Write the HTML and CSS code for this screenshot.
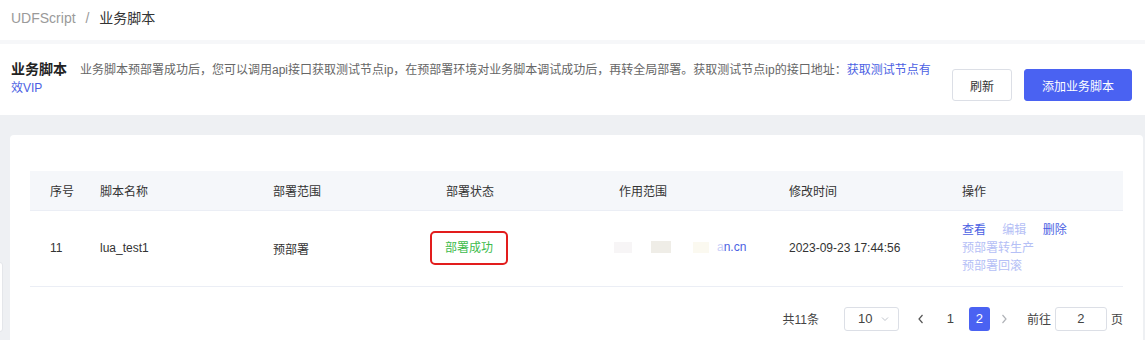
FILE: index.html
```html
<!DOCTYPE html>
<html lang="zh-CN">
<head>
    <meta charset="UTF-8">
    <meta name="viewport" content="width=device-width, initial-scale=1.0">
    <title>业务脚本</title>
    <link rel="stylesheet" href="styles.css">
</head>
<body>
    <div class="breadcrumb">
        <span class="crumb-parent">UDFScript</span>
        <span class="crumb-sep">/</span>
        <span class="crumb-current">业务脚本</span>
    </div>

    <div class="page-head">
        <p class="head-text">
            <span class="head-title">业务脚本</span>业务脚本预部署成功后，您可以调用api接口获取测试节点ip，在预部署环境对业务脚本调试成功后，再转全局部署。获取测试节点ip的接口地址：<a class="link" href="#">获取测试节点有效VIP</a>
        </p>
        <div class="head-actions">
            <button type="button" class="btn">刷新</button>
            <button type="button" class="btn btn-primary">添加业务脚本</button>
        </div>
    </div>

    <div class="content">
        <div class="card">
            <table class="script-table">
                <colgroup>
                    <col class="col-index">
                    <col class="col-wide">
                    <col class="col-wide">
                    <col class="col-wide">
                    <col class="col-scope">
                    <col class="col-wide">
                    <col>
                </colgroup>
                <thead>
                    <tr>
                        <th>序号</th>
                        <th>脚本名称</th>
                        <th>部署范围</th>
                        <th>部署状态</th>
                        <th>作用范围</th>
                        <th>修改时间</th>
                        <th>操作</th>
                    </tr>
                </thead>
                <tbody>
                    <tr>
                        <td>11</td>
                        <td>lua_test1</td>
                        <td>预部署</td>
                        <td><span class="status-mark"><span class="status-ok">部署成功</span></span></td>
                        <td>
                            <span class="scope">
                                <span class="blot blot-a"></span>
                                <span class="blot blot-b"></span>
                                <span class="blot blot-c"></span>
                                <a class="link scope-link" href="#"><span class="faded">a</span>n.cn</a>
                            </span>
                        </td>
                        <td>2023-09-23 17:44:56</td>
                        <td>
                            <div class="ops">
                                <a class="op" href="#">查看</a>
                                <a class="op op-off" href="#">编辑</a>
                                <a class="op" href="#">删除</a>
                            </div>
                            <div class="ops"><a class="op op-off" href="#">预部署转生产</a></div>
                            <div class="ops"><a class="op op-off" href="#">预部署回滚</a></div>
                        </td>
                    </tr>
                </tbody>
            </table>

            <div class="pager">
                <span class="pager-total">共11条</span>
                <div class="pager-size">
                    <span>10</span>
                    <svg width="10" height="10" viewBox="0 0 10 10"><path d="M2 3.5 L5 6.5 L8 3.5" fill="none" stroke="#c0c4cc" stroke-width="1"/></svg>
                </div>
                <span class="pager-arrow pager-prev">
                    <svg width="10" height="12" viewBox="0 0 10 12"><path d="M6.5 2 L3 6 L6.5 10" fill="none" stroke="#555" stroke-width="1.2"/></svg>
                </span>
                <span class="pager-num">1</span>
                <span class="pager-num active">2</span>
                <span class="pager-arrow">
                    <svg width="10" height="12" viewBox="0 0 10 12"><path d="M3.5 2 L7 6 L3.5 10" fill="none" stroke="#b0b3b8" stroke-width="1.2"/></svg>
                </span>
                <span class="pager-jump">前往</span>
                <div class="pager-input">2</div>
                <span class="pager-unit">页</span>
            </div>
        </div>
    </div>

    <div class="side-tab"></div>
</body>
</html>
```

FILE: styles.css
```css
* {
    margin: 0;
    padding: 0;
    box-sizing: border-box;
}

body {
    font-family: "Liberation Sans", "Noto Sans CJK SC", sans-serif;
    background-color: #eef0f3;
    color: #333;
    font-size: 12px;
    width: 1145px;
    height: 340px;
    overflow: hidden;
}

a {
    text-decoration: none;
}

.breadcrumb {
    height: 44px;
    background-color: #fff;
    border-bottom: 4px solid #f6f7f9;
    padding: 8px 11px 0;
    font-size: 14px;
    line-height: 20px;
}

.crumb-parent {
    color: #9a9a9a;
}

.crumb-sep {
    color: #9a9a9a;
    margin: 0 6px;
}

.crumb-current {
    color: #333;
}

.page-head {
    display: flex;
    background-color: #fff;
    padding: 16px 13px 12px 11px;
    height: 71px;
}

.head-text {
    flex: 1;
    color: #666;
    line-height: 18px;
    padding-right: 14px;
}

.head-title {
    font-size: 14px;
    font-weight: bold;
    color: #222;
    margin-right: 13px;
}

.link {
    color: #4b5fe3;
}

.head-actions {
    display: flex;
    gap: 12px;
    margin-top: 9px;
}

.btn {
    height: 32px;
    padding: 0 17px;
    font-family: inherit;
    font-size: 12px;
    color: #333;
    background-color: #fff;
    border: 1px solid #dcdfe6;
    border-radius: 3px;
}

.btn-primary {
    background-color: #4a62f2;
    border-color: #4a62f2;
    color: #fff;
}

.content {
    padding: 20px 2px 0 10px;
}

.card {
    background-color: #fff;
    border-radius: 4px 4px 0 0;
    padding: 36px 20px 10px;
}

.script-table {
    width: 100%;
    border-collapse: collapse;
    table-layout: fixed;
}

.col-index {
    width: 60px;
}

.col-wide {
    width: 173px;
}

.col-scope {
    width: 170px;
}

.script-table th,
.script-table td {
    text-align: left;
    font-weight: normal;
    color: #333;
    padding: 0 10px;
    border-bottom: 1px solid #ebeef5;
    white-space: nowrap;
}

.script-table th:first-child,
.script-table td:first-child {
    padding-left: 20px;
}

.script-table th {
    height: 39px;
    background-color: #f5f7fa;
}

.script-table td {
    height: 76px;
}

.status-mark {
    display: inline-block;
    margin-left: -16px;
    padding: 6px 13px;
    border: 2px solid #e21d1d;
    border-radius: 5px;
    line-height: 18px;
}

.status-ok {
    color: #3dbb4c;
}

.scope {
    display: inline-flex;
    align-items: center;
    margin-left: -5px;
}

.blot {
    display: inline-block;
    height: 11px;
}

.blot-a {
    width: 18px;
    background-color: #f7f5f6;
}

.blot-b {
    width: 20px;
    height: 12px;
    margin-left: 19px;
    background-color: #efede7;
}

.blot-c {
    width: 16px;
    margin-left: 22px;
    background-color: #fbf9f0;
}

.scope-link {
    margin-left: 8px;
}

.faded {
    color: #c9cff7;
}

.ops {
    line-height: 18px;
}

.op {
    color: #4b5fe3;
    margin-right: 13px;
}

.op-off {
    color: #b5c0f6;
}

.pager {
    display: flex;
    justify-content: flex-end;
    align-items: center;
    margin-top: 20px;
    font-size: 12px;
    color: #444;
}

.pager-total {
    margin-right: 25px;
}

.pager-size {
    display: flex;
    align-items: center;
    justify-content: space-between;
    width: 55px;
    height: 24px;
    padding: 0 8px 0 13px;
    border: 1px solid #dcdfe6;
    border-radius: 3px;
    margin-right: 12px;
    font-size: 13px;
}

.pager-arrow {
    display: flex;
    width: 20px;
    justify-content: center;
}

.pager-prev {
    margin-right: 5px;
}

.pager-num {
    width: 21px;
    height: 24px;
    line-height: 24px;
    text-align: center;
    margin: 0 4px;
    font-size: 13px;
}

.pager-num.active {
    background-color: #4a62f2;
    color: #fff;
    border-radius: 3px;
}

.pager-jump {
    margin-left: 13px;
    margin-right: 4px;
}

.pager-input {
    width: 52px;
    height: 24px;
    line-height: 22px;
    text-align: center;
    border: 1px solid #dcdfe6;
    border-radius: 3px;
    margin-right: 4px;
    font-size: 13px;
}

.side-tab {
    position: absolute;
    left: -6px;
    top: 262px;
    width: 9px;
    height: 70px;
    background-color: #fff;
    border: 1px solid #e4e6ea;
    border-radius: 3px;
}
```
